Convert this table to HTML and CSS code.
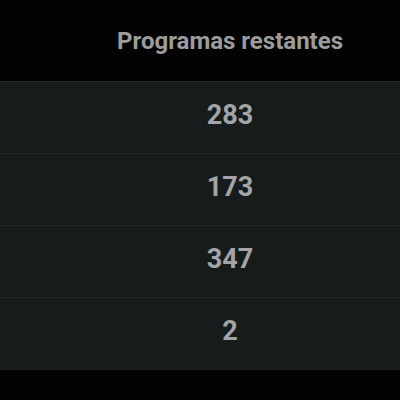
FILE: index.html
```html
<!DOCTYPE html>
<html lang="es">
<head>
<meta charset="utf-8">
<link rel="stylesheet" href="styles.css">
</head>
<body>
<div class="table">
  <div class="row head">
    <div class="cell spacer"></div>
    <div class="cell">Programas restantes</div>
  </div>
  <div class="row">
    <div class="cell spacer"></div>
    <div class="cell num">283</div>
  </div>
  <div class="row">
    <div class="cell spacer"></div>
    <div class="cell num">173</div>
  </div>
  <div class="row">
    <div class="cell spacer"></div>
    <div class="cell num">347</div>
  </div>
  <div class="row">
    <div class="cell spacer"></div>
    <div class="cell num">2</div>
  </div>
</div>
</body>
</html>
```

FILE: styles.css
```css
html, body {
  margin: 0;
  padding: 0;
  background: #030303;
  width: 400px;
  height: 400px;
  overflow: hidden;
}
body {
  font-family: Roboto, "Liberation Sans", sans-serif;
}
.table {
  display: flex;
  flex-direction: column;
}
.row {
  display: grid;
  grid-template-columns: 60px 1fr;
  height: 71px;
  background: #161c1c;
  border-top: 1px solid #222828;
}
.row.head {
  height: 81px;
  background: #030303;
  border-top: none;
}
.row:last-child {
  border-bottom: 1px solid #1b1921;
}
.cell {
  display: flex;
  align-items: center;
  justify-content: center;
  color: #a0a0a2;
  font-weight: 700;
}
.head .cell {
  font-size: 24px;
  color: #9c9c9c;
  padding-top: 1px;
}
.num {
  font-size: 27px;
  color: #a4a4a8;
  padding-bottom: 6px;
}
```
